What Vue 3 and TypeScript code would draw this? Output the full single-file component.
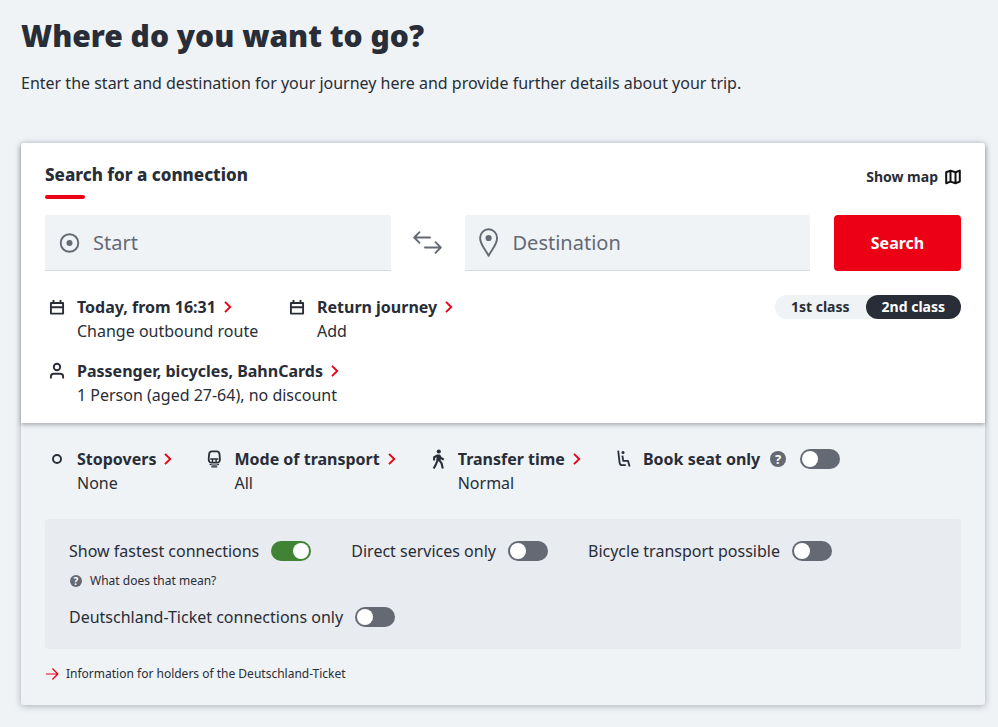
<script setup lang="ts">
import { ref } from 'vue'

const start = ref('')
const destination = ref('')
const travelClass = ref<'1' | '2'>('2')
const seatOnly = ref(false)

interface Filter {
  id: string
  label: string
  on: boolean
  help?: string
}

const filters = ref<Filter[]>([
  { id: 'fastest', label: 'Show fastest connections', on: true, help: 'What does that mean?' },
  { id: 'direct', label: 'Direct services only', on: false },
  { id: 'bicycle', label: 'Bicycle transport possible', on: false },
  { id: 'dticket', label: 'Deutschland-Ticket connections only', on: false },
])

function swap() {
  const previous = start.value
  start.value = destination.value
  destination.value = previous
}
</script>

<template>
  <main class="page">
    <h1>Where do you want to go?</h1>
    <p class="lead">Enter the start and destination for your journey here and provide further details about your trip.</p>

    <form class="card" @submit.prevent>
      <section class="search">
        <header class="search-head">
          <h2>Search for a connection</h2>
          <button type="button" class="map-button">
            Show map
            <svg width="16" height="16" viewBox="0 0 16 16" fill="none" stroke="#111" stroke-width="2" stroke-linejoin="round">
              <path d="M1.2 3.2 5.5 1.6 10.5 3.2 14.8 1.6V12.6L10.5 14.2 5.5 12.6 1.2 14.2ZM5.5 1.6V12.6M10.5 3.2V14.2" />
            </svg>
          </button>
        </header>

        <div class="route">
          <label class="field">
            <svg width="24" height="24" viewBox="0 0 24 24" fill="none" stroke="#646973">
              <circle cx="12.5" cy="12" r="8.8" stroke-width="1.9" />
              <circle cx="12.5" cy="12" r="3" fill="#646973" stroke="none" />
            </svg>
            <input v-model="start" type="text" placeholder="Start" aria-label="Start" />
          </label>
          <button type="button" class="swap" aria-label="Swap" @click="swap">
            <svg width="32" height="32" viewBox="0 0 32 32" fill="none" stroke="#646973" stroke-width="1.9" stroke-linecap="round" stroke-linejoin="round">
              <path d="M18 10.5H2.5M7.5 5.2 2.2 10.5 7.5 15.8M13 20.5H28.5M23.5 15.2 28.8 20.5 23.5 25.8" />
            </svg>
          </button>
          <label class="field">
            <svg width="24" height="32" viewBox="0 0 24 32" fill="none" stroke="#646973">
              <path d="M11.6 28.8C9.4 23.6 3.1 18 3.1 11A8.5 8.7 0 0 1 20.1 11C20.1 18 13.8 23.6 11.6 28.8Z" stroke-width="1.9" stroke-linejoin="round" />
              <circle cx="11.6" cy="11" r="3.1" fill="#646973" stroke="none" />
            </svg>
            <input v-model="destination" type="text" placeholder="Destination" aria-label="Destination" />
          </label>
          <button type="submit" class="submit">Search</button>
        </div>

        <div class="details">
          <div class="dates">
            <button v-for="d in [['Today, from 16:31', 'Change outbound route'], ['Return journey', 'Add']]" :key="d[0]" type="button" class="option">
              <svg width="24" height="24" viewBox="0 0 24 24" fill="none" stroke="#282d37" stroke-width="1.9">
                <path d="M5.9 8H18.1V18.6H5.9ZM6 12.3H18M8.5 5V8M15.5 5V8" stroke-linejoin="round" />
              </svg>
              <span class="option-title">{{ d[0] }}
                <svg class="chevron" width="10" height="14" viewBox="0 0 10 14"><path d="M2 1.8 7.2 7 2 12.2" /></svg>
              </span>
              <span class="option-value">{{ d[1] }}</span>
            </button>
          </div>
          <fieldset class="classes" aria-label="Class">
            <label :class="{ active: travelClass === '1' }"><input v-model="travelClass" type="radio" name="class" value="1" />1st class</label>
            <label :class="{ active: travelClass === '2' }"><input v-model="travelClass" type="radio" name="class" value="2" />2nd class</label>
          </fieldset>
        </div>

        <button type="button" class="option">
          <svg width="24" height="24" viewBox="0 0 24 24" fill="none" stroke="#282d37" stroke-width="1.9">
            <circle cx="12" cy="8" r="3.2" />
            <path d="M5.9 19.5V17.5Q5.9 14.8 8.6 14.8H15.4Q18.1 14.8 18.1 17.5V19.5" />
          </svg>
          <span class="option-title">Passenger, bicycles, BahnCards
            <svg class="chevron" width="10" height="14" viewBox="0 0 10 14"><path d="M2 1.8 7.2 7 2 12.2" /></svg>
          </span>
          <span class="option-value">1 Person (aged 27-64), no discount</span>
        </button>
      </section>

      <section class="extras">
        <div class="extras-row">
          <button type="button" class="option">
            <svg width="24" height="24" viewBox="0 0 24 24" fill="none" stroke="#282d37" stroke-width="1.9">
              <circle cx="12" cy="12" r="4" />
            </svg>
            <span class="option-title">Stopovers
              <svg class="chevron" width="10" height="14" viewBox="0 0 10 14"><path d="M2 1.8 7.2 7 2 12.2" /></svg>
            </span>
            <span class="option-value">None</span>
          </button>
          <button type="button" class="option">
            <svg width="24" height="24" viewBox="0 0 24 24" fill="none" stroke="#282d37">
              <path d="M9.8 4.3H14.8Q17.2 4.3 17.5 7.2L17.9 12Q18 15.7 15 15.7H9.6Q6.6 15.7 6.7 12L7.1 7.2Q7.4 4.3 9.8 4.3Z" stroke-width="1.8" />
              <path d="M8.2 12H16.4M10.5 12V15M14.1 12V15" stroke-width="1.4" />
              <path d="M7.6 17.2Q12.3 19.2 17 17.2M9.3 19.8H15.3" stroke-width="1.2" />
            </svg>
            <span class="option-title">Mode of transport
              <svg class="chevron" width="10" height="14" viewBox="0 0 10 14"><path d="M2 1.8 7.2 7 2 12.2" /></svg>
            </span>
            <span class="option-value">All</span>
          </button>
          <button type="button" class="option">
            <svg width="24" height="24" viewBox="0 0 24 24" fill="none" stroke="#282d37" stroke-width="2.1" stroke-linejoin="round">
              <circle cx="12.8" cy="4.5" r="2.1" fill="#282d37" stroke="none" />
              <path d="M11.9 8.5 11.2 14 10 17.2 7.7 21.4M13.6 8.5V13.5L15.6 16.4 16.8 21.4M8.1 13.4V10.3L11.5 8.5H13.4L14.9 11 17.8 12.7" />
              <path d="M11.5 8.3H14V14.3H11.2Z" fill="#282d37" stroke="none" />
            </svg>
            <span class="option-title">Transfer time
              <svg class="chevron" width="10" height="14" viewBox="0 0 10 14"><path d="M2 1.8 7.2 7 2 12.2" /></svg>
            </span>
            <span class="option-value">Normal</span>
          </button>
          <div class="seat">
            <svg width="24" height="24" viewBox="0 0 24 24" fill="none" stroke="#282d37" stroke-width="1.8" stroke-linejoin="round">
              <circle cx="12" cy="5.5" r="1.5" fill="#282d37" stroke="none" />
              <path d="M7.2 3.6 8.6 15.6Q9 18.2 11 18.2H14.8" />
              <path d="M11.4 8.6 12.2 13.8H17L18.6 19.4" />
            </svg>
            <label for="seat" class="seat-label">Book seat only</label>
            <button type="button" class="help" aria-label="Help">?</button>
            <input id="seat" v-model="seatOnly" class="switch" type="checkbox" />
          </div>
        </div>

        <div class="filters">
          <div v-for="f in filters" :key="f.id" class="filter">
            <div class="filter-line">
              <label :for="f.id">{{ f.label }}</label>
              <input :id="f.id" v-model="f.on" class="switch" type="checkbox" />
            </div>
            <button v-if="f.help" type="button" class="explain"><span class="help small">?</span>{{ f.help }}</button>
          </div>
        </div>

        <a class="info" href="#">
          <svg width="14" height="14" viewBox="0 0 14 14" fill="none" stroke="#ec0016" stroke-width="1.2" stroke-linejoin="round">
            <path d="M1 7H12.6M7.4 1.5 12.8 7 7.4 12.5" />
          </svg>
          Information for holders of the Deutschland-Ticket
        </a>
      </section>
    </form>
  </main>
</template>

<style>
body {
  margin: 0;
  background: #eff3f6;
}
</style>

<style scoped>
* {
  box-sizing: border-box;
}
.page {
  padding: 12px 13px 22px 21px;
  color: #282d37;
  font: 16px/24px "Noto Sans", sans-serif;
}
button,
input {
  font: inherit;
  color: inherit;
}
button {
  padding: 0;
  border: 0;
  background: none;
  text-align: left;
  cursor: pointer;
}
svg {
  display: block;
  flex: none;
}
h1 {
  margin: 0;
  font-size: 30px;
  line-height: 48px;
  font-weight: 900;
}
.lead {
  margin: 11px 0 48px;
}
.card {
  border-radius: 3px;
  box-shadow: 0 1px 7px rgba(40, 45, 55, 0.35);
}
.search {
  padding: 20px 24px 16px;
  border-radius: 3px 3px 0 0;
  background: #fff;
  box-shadow: 0 2px 4px rgba(40, 45, 55, 0.35);
}
.search-head {
  display: flex;
  justify-content: space-between;
  align-items: flex-start;
}
h2 {
  margin: 0;
  font-size: 17px;
  line-height: 24px;
  font-weight: 800;
}
h2::after {
  content: "";
  display: block;
  width: 40px;
  height: 4px;
  margin-top: 8px;
  border-radius: 2px;
  background: #ec0016;
}
.map-button {
  display: flex;
  align-items: center;
  gap: 7px;
  padding-top: 2px;
  font-size: 14px;
  font-weight: 700;
}
.route {
  display: flex;
  margin-top: 16px;
}
.field {
  display: flex;
  flex: 1 1 0;
  min-width: 0;
  align-items: center;
  gap: 12px;
  height: 56px;
  padding: 0 12px;
  border-bottom: 1px solid #d7dce1;
  border-radius: 2px 2px 0 0;
  background: #eff3f6;
}
.field input {
  flex: 1;
  min-width: 0;
  padding: 0;
  border: 0;
  outline: 0;
  background: none;
  font-size: 20px;
}
.field input::placeholder {
  color: #646973;
  opacity: 1;
}
.swap {
  display: flex;
  flex: 0 0 74px;
  align-items: center;
  justify-content: center;
}
.submit {
  flex: 0 0 127px;
  margin-left: 24px;
  border-radius: 4px;
  background: #ec0016;
  color: #fff;
  font-weight: 700;
  text-align: center;
}
.details {
  display: flex;
  justify-content: space-between;
  align-items: flex-start;
  margin: 24px 0 16px;
}
.dates {
  display: grid;
  grid-template-columns: 240px auto;
}
.option {
  display: grid;
  grid-template-columns: 24px auto;
  column-gap: 8px;
  justify-content: start;
  white-space: nowrap;
}
.option-title {
  display: flex;
  align-items: center;
  gap: 7px;
  font-weight: 700;
}
.option-value {
  grid-column: 2;
}
.chevron {
  fill: none;
  stroke: #ec0016;
  stroke-width: 1.9;
}
.classes {
  display: flex;
  margin: 0;
  padding: 0;
  border: 0;
  border-radius: 12px;
  background: #eff3f6;
  font-size: 14px;
  font-weight: 700;
}
.classes label {
  padding: 0 16px;
  border-radius: 12px;
  cursor: pointer;
}
.classes .active {
  background: #282d37;
  color: #fff;
}
.classes input {
  position: absolute;
  opacity: 0;
  pointer-events: none;
}
.extras {
  padding: 24px 24px 19px;
}
.extras-row {
  display: flex;
  gap: 29px;
  align-items: flex-start;
}
.seat {
  display: flex;
  align-items: center;
  white-space: nowrap;
}
.seat-label {
  margin: 0 10px 0 8px;
  font-weight: 700;
}
.help {
  width: 16px;
  height: 16px;
  border-radius: 50%;
  background: #646973;
  color: #fff;
  font-size: 13px;
  line-height: 16px;
  font-weight: 700;
  text-align: center;
}
.seat .switch {
  margin-left: 14px;
}
.small {
  width: 12px;
  height: 12px;
  font-size: 10px;
  line-height: 12px;
}
.switch {
  flex: none;
  width: 40px;
  height: 20px;
  margin: 0;
  padding: 2px;
  border-radius: 10px;
  background: #646973;
  appearance: none;
  cursor: pointer;
}
.switch::before {
  content: "";
  display: block;
  width: 16px;
  height: 16px;
  border-radius: 50%;
  background: #fff;
}
.switch:checked {
  background: #408335;
}
.switch:checked::before {
  margin-left: 20px;
}
.filters {
  display: flex;
  flex-wrap: wrap;
  gap: 14px 40px;
  margin-top: 24px;
  padding: 20px 24px;
  border-radius: 4px;
  background: #e8ebef;
}
.filter-line {
  display: flex;
  align-items: center;
  gap: 12px;
}
.explain {
  display: flex;
  align-items: center;
  gap: 8px;
  height: 20px;
  margin-top: 8px;
  padding-left: 1px;
  font-size: 12px;
}
.info {
  display: flex;
  align-items: center;
  gap: 7px;
  margin-top: 13px;
  color: inherit;
  font-size: 12px;
  text-decoration: none;
}
</style>
